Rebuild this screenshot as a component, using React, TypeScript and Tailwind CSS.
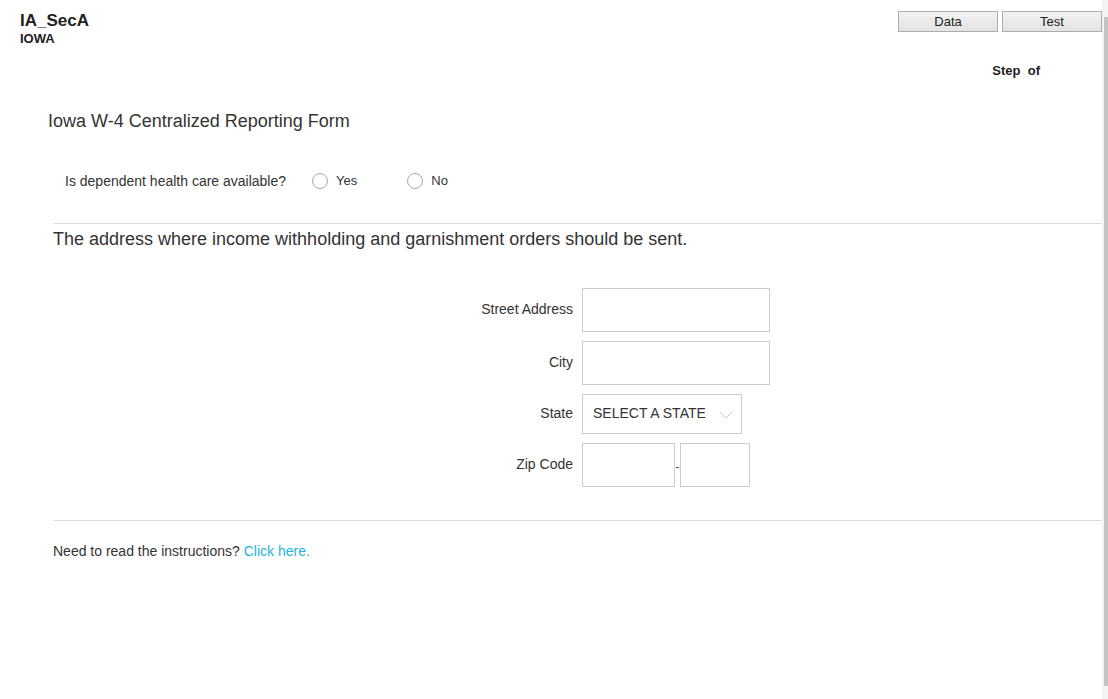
const labelCls = "w-[130px] pr-[9px] text-right text-[14px] text-[#333]";
const boxCls = "h-[44px] border border-[#cccccc] bg-white";

function Radio({ label, className = "" }: { label: string; className?: string }) {
  return (
    <label className={`flex items-center ${className}`}>
      <span className="h-[16px] w-[16px] rounded-full border-[1.5px] border-[#a9a9a9] bg-white" />
      <span className="ml-[8px] text-[13px] text-[#333]">{label}</span>
    </label>
  );
}

export default function App() {
  return (
    <div className="flex h-[699px] w-[1108px] bg-white font-['Liberation_Sans',Arial,sans-serif] text-[#333]">
      <div className="w-[1102px]">
        {/* header */}
        <div className="flex items-start justify-between pl-[20px] pt-[11px]">
          <div>
            <div className="text-[17px] font-bold leading-[19px] text-[#222]">IA_SecA</div>
            <div className="mt-[1px] text-[13px] font-bold leading-[15px] text-[#222]">IOWA</div>
          </div>
          <div className="flex flex-col items-end">
            <div className="flex gap-[4px]">
              {["Data", "Test"].map((b) => (
                <button
                  key={b}
                  type="button"
                  className="h-[21px] w-[100px] border border-[#adadad] bg-gradient-to-b from-[#f2f2f2] to-[#e3e3e3] text-[13px] leading-[19px] text-[#222]"
                >
                  {b}
                </button>
              ))}
            </div>
            <div className="mr-[62px] mt-[29px] text-[13px] font-bold text-[#222]">Step&nbsp; of</div>
          </div>
        </div>

        {/* title */}
        <h1 className="ml-[48px] mt-[29px] text-[18px] leading-[22px] text-[#333]">
          Iowa W-4 Centralized Reporting Form
        </h1>

        {/* question */}
        <div className="ml-[65px] mt-[39px] flex items-center">
          <span className="text-[14px] text-[#333]">Is dependent health care available?</span>
          <Radio label="Yes" className="ml-[26px]" />
          <Radio label="No" className="ml-[50px]" />
        </div>

        <div className="ml-[53px] mt-[31px] border-t border-[#dddddd]" />

        <h2 className="ml-[53px] mt-[4px] text-[18px] leading-[22px] text-[#333]">
          The address where income withholding and garnishment orders should be sent.
        </h2>

        {/* address form */}
        <div className="ml-[452px] mt-[38px] flex flex-col gap-[9px]">
          <div className="flex items-center">
            <span className={labelCls}>Street Address</span>
            <div className={`${boxCls} w-[188px]`} />
          </div>
          <div className="flex items-center">
            <span className={labelCls}>City</span>
            <div className={`${boxCls} w-[188px]`} />
          </div>
          <div className="flex items-center">
            <span className={labelCls}>State</span>
            <div className="flex h-[40px] w-[160px] items-center justify-between border border-[#cccccc] bg-white pl-[10px] pr-[8px]">
              <span className="text-[14px] text-[#333]">SELECT A STATE</span>
              <svg viewBox="0 0 14 8" className="mt-[3px] h-[8px] w-[14px]" fill="none">
                <path d="M1 1l6 6 6-6" stroke="#c8c8c8" strokeWidth="1" />
              </svg>
            </div>
          </div>
          <div className="flex items-center">
            <span className={labelCls}>Zip Code</span>
            <div className={`${boxCls} w-[93px]`} />
            <span className="mt-[4px] w-[5px] text-center text-[13px] text-[#555]">-</span>
            <div className={`${boxCls} w-[70px]`} />
          </div>
        </div>

        <div className="ml-[53px] mt-[33px] border-t border-[#dddddd]" />

        <p className="ml-[53px] mt-[20px] text-[14px] text-[#333]">
          Need to read the instructions? <a className="text-[#1fb4e3]">Click here.</a>
        </p>
      </div>

      {/* scrollbar */}
      <div className="flex w-[6px] flex-col bg-[#f3f3f3] pb-[13px] pt-[17px]">
        <div className="ml-[2px] flex-1 bg-[#c3c3c3]" />
      </div>
    </div>
  );
}
